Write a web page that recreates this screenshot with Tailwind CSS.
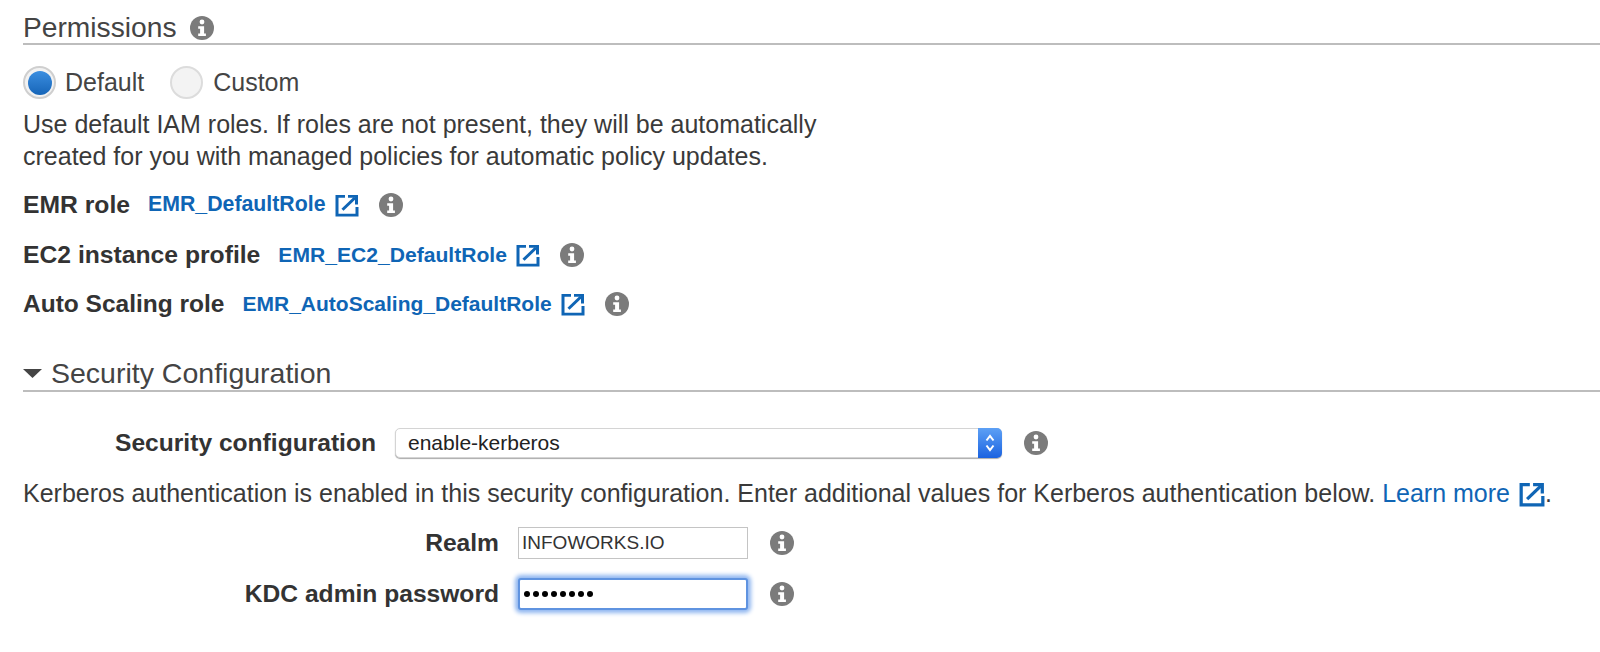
<!DOCTYPE html>
<html><head><meta charset="utf-8"><script src="https://cdn.jsdelivr.net/npm/@tailwindcss/browser@4"></script></head>
<body class="bg-white">
<svg class="hidden"><defs>
<symbol id="info" viewBox="0 0 24 24"><circle cx="12" cy="12" r="12" fill="#7b7b7b"/><circle cx="12" cy="6" r="2.400" fill="#fff"/><path d="M8.200 10.200h5.900v7.300h1.800v2.600H8.200v-2.600h1.900v-4.700H8.200z" fill="#fff"/></symbol>
<symbol id="ext" viewBox="0 0 24 24" preserveAspectRatio="none"><path d="M10 2.500H2v19.500h20V13.500" fill="none" stroke="#0f65b5" stroke-width="3"/><path d="M7.500 16.500 20 4" fill="none" stroke="#0f65b5" stroke-width="3"/><path d="M13 1h10v10h-3V4h-7z" fill="#0f65b5"/></symbol>
</defs></svg>
<div class="w-[1600px] h-[652px] overflow-hidden relative font-['Liberation_Sans',Arial,sans-serif] text-[#333] pl-[23px]">
  <div class="flex items-center h-[45px] pt-[12px] border-b-2 border-[#bdbdbd] text-[28.2px] text-[#444] gap-[13px]">
    <span>Permissions</span><svg class="w-[24px] h-[24px]"><use href="#info"/></svg>
  </div>
  <div class="flex items-center h-[33px] mt-[21px] text-[25px] text-[#444]">
    <span class="w-[33px] h-[33px] rounded-full border-2 border-[#cfcfcf] bg-[#f2f2f2] flex items-center justify-center"><span class="w-[24px] h-[24px] rounded-full bg-gradient-to-b from-[#3b8ee0] to-[#1565b8]"></span></span>
    <span class="ml-[9px]">Default</span>
    <span class="ml-[26px] w-[33px] h-[33px] rounded-full border-2 border-[#dcdcdc] bg-[#f3f3f3]"></span>
    <span class="ml-[10px]">Custom</span>
  </div>
  <p class="mt-[9px] text-[25px] leading-[32px] text-[#3a3a3a]">Use default IAM roles. If roles are not present, they will be automatically<br>created for you with managed policies for automatic policy updates.</p>
  <div class="flex items-center h-[30px] mt-[18px] gap-[18px]">
    <span class="text-[24.7px] font-bold text-[#333]">EMR role</span>
    <span class="flex items-center"><a class="text-[21.3px] font-bold text-[#0f65b5]">EMR_DefaultRole</a><svg class="w-[24px] h-[23px] ml-[9px]"><use href="#ext"/></svg></span>
    <svg class="w-[24px] h-[24px] ml-[2px]"><use href="#info"/></svg>
  </div>
  <div class="flex items-center h-[30px] mt-[20px] gap-[18px]">
    <span class="text-[24.7px] font-bold text-[#333]">EC2 instance profile</span>
    <span class="flex items-center"><a class="text-[21.1px] font-bold text-[#0f65b5]">EMR_EC2_DefaultRole</a><svg class="w-[24px] h-[23px] ml-[9px]"><use href="#ext"/></svg></span>
    <svg class="w-[24px] h-[24px] ml-[2px]"><use href="#info"/></svg>
  </div>
  <div class="flex items-center h-[30px] mt-[19px] gap-[18px]">
    <span class="text-[24.5px] font-bold text-[#333]">Auto Scaling role</span>
    <span class="flex items-center"><a class="text-[21px] font-bold text-[#0f65b5]">EMR_AutoScaling_DefaultRole</a><svg class="w-[24px] h-[23px] ml-[9px]"><use href="#ext"/></svg></span>
    <svg class="w-[24px] h-[24px] ml-[2px]"><use href="#info"/></svg>
  </div>
  <div class="flex items-center h-[40px] mt-[33px] pt-[5px] border-b-2 border-[#bdbdbd] text-[28.5px] text-[#444]">
    <svg class="w-[19px] h-[9px] mr-[9px]" viewBox="0 0 18 10" preserveAspectRatio="none"><path d="M0 0h18L9 10z" fill="#444"/></svg>
    <span>Security Configuration</span>
  </div>
  <div class="flex items-center h-[30px] mt-[36px]">
    <span class="w-[353px] text-right text-[24.6px] font-bold text-[#333]">Security configuration</span>
    <div class="ml-[19px] w-[607px] h-[30px] rounded-[5px] border border-[#d4d4d4] shadow-[0_1px_1px_#aaa] bg-white flex items-center justify-between">
      <span class="ml-[12px] text-[21px] text-[#222]">enable-kerberos</span>
      <span class="w-[24px] h-[30px] -mr-[1px] rounded-r-[5px] bg-gradient-to-b from-[#5da0f5] to-[#1a62e0] flex items-center justify-center"><svg class="w-[12px] h-[20px]" viewBox="0 0 12 20"><path d="M2.500 7.500 6 3l3.500 4.500M2.500 12.500 6 17l3.500-4.500" fill="none" stroke="#fff" stroke-width="2"/></svg></span>
    </div>
    <svg class="w-[24px] h-[24px] ml-[22px]"><use href="#info"/></svg>
  </div>
  <p class="mt-[21px] h-[30px] flex items-center text-[25px] text-[#3a3a3a] whitespace-nowrap">Kerberos authentication is enabled in this security configuration. Enter additional values for Kerberos authentication below.&nbsp;<a class="text-[#0f65b5]">Learn more</a><svg class="w-[26px] h-[25px] ml-[9px]"><use href="#ext"/></svg>.</p>
  <div class="flex items-center h-[32px] mt-[18px]">
    <span class="w-[476px] text-right text-[24.6px] font-bold text-[#333]">Realm</span>
    <div class="ml-[19px] w-[230px] h-[32px] border border-[#c4c4c4] bg-white pl-[3px] flex items-center text-[19px] text-[#333]">INFOWORKS.IO</div>
    <svg class="w-[24px] h-[24px] ml-[22px]"><use href="#info"/></svg>
  </div>
  <div class="flex items-center h-[32px] mt-[19px]">
    <span class="w-[476px] text-right text-[24.6px] font-bold text-[#333]">KDC admin password</span>
    <div class="ml-[19px] w-[230px] h-[32px] rounded-[3px] border-2 border-[#5f93e0] shadow-[0_0_4px_3px_#8fb6f0] bg-white pl-[4px] flex items-center gap-[3px]">
      <span class="w-[6px] h-[6px] rounded-full bg-black"></span><span class="w-[6px] h-[6px] rounded-full bg-black"></span><span class="w-[6px] h-[6px] rounded-full bg-black"></span><span class="w-[6px] h-[6px] rounded-full bg-black"></span><span class="w-[6px] h-[6px] rounded-full bg-black"></span><span class="w-[6px] h-[6px] rounded-full bg-black"></span><span class="w-[6px] h-[6px] rounded-full bg-black"></span><span class="w-[6px] h-[6px] rounded-full bg-black"></span>
    </div>
    <svg class="w-[24px] h-[24px] ml-[22px]"><use href="#info"/></svg>
  </div>
</div>
</body></html>
